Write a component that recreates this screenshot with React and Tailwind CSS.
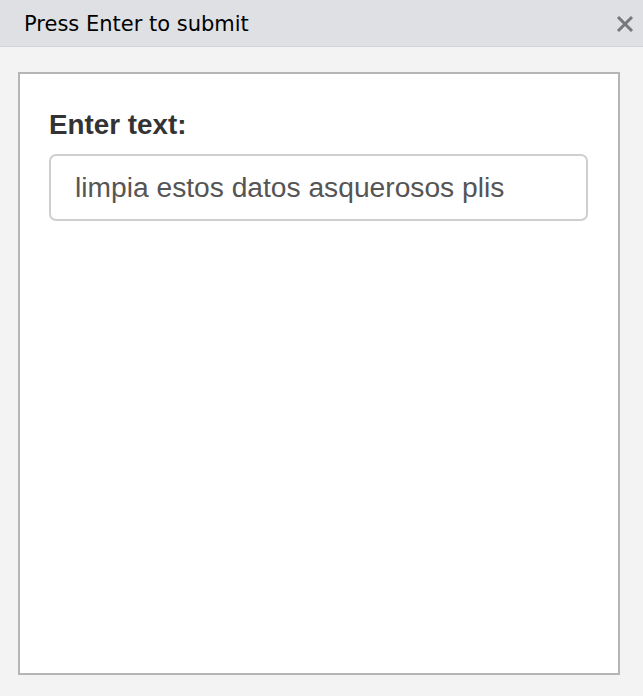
export default function App() {
  return (
    <div className="h-[696px] w-full flex flex-col bg-[#f2f3f2] overflow-hidden">
      {/* Title bar */}
      <div className="h-[47px] shrink-0 flex items-center justify-between bg-[#dfe0e4] border-b border-[#d2d3d6] pl-[24px] pr-[9px]">
        <span
          className="text-[21px] text-black leading-none pt-[3px]"
          style={{ fontFamily: '"DejaVu Sans", sans-serif' }}
        >
          Press Enter to submit
        </span>
        <svg width="18" height="18" viewBox="0 0 18 18" className="mt-[1px]">
          <path d="M2 2 L16 16 M16 2 L2 16" stroke="#777" strokeWidth="3" strokeLinecap="butt" />
        </svg>
      </div>

      {/* Body */}
      <div className="flex-1 flex flex-col pt-[25px] pl-[18px] pr-[23px] pb-[21px]">
        <div
          className="flex-1 bg-white border-2 border-[#b5b5b5] pt-[36px] pl-[29px] pr-[30px]"
          style={{ fontFamily: '"Liberation Sans", Arial, sans-serif' }}
        >
          <label className="block text-[27.8px] leading-[30px] font-bold text-[#333]">
            Enter text:
          </label>
          <input
            type="text"
            defaultValue="limpia estos datos asquerosos plis"
            className="mt-[14px] block w-full h-[67px] rounded-[7px] border-2 border-[#cfcfcf] pl-[24px] text-[28.2px] text-[#555] outline-none bg-white"
          />
        </div>
      </div>
    </div>
  );
}
